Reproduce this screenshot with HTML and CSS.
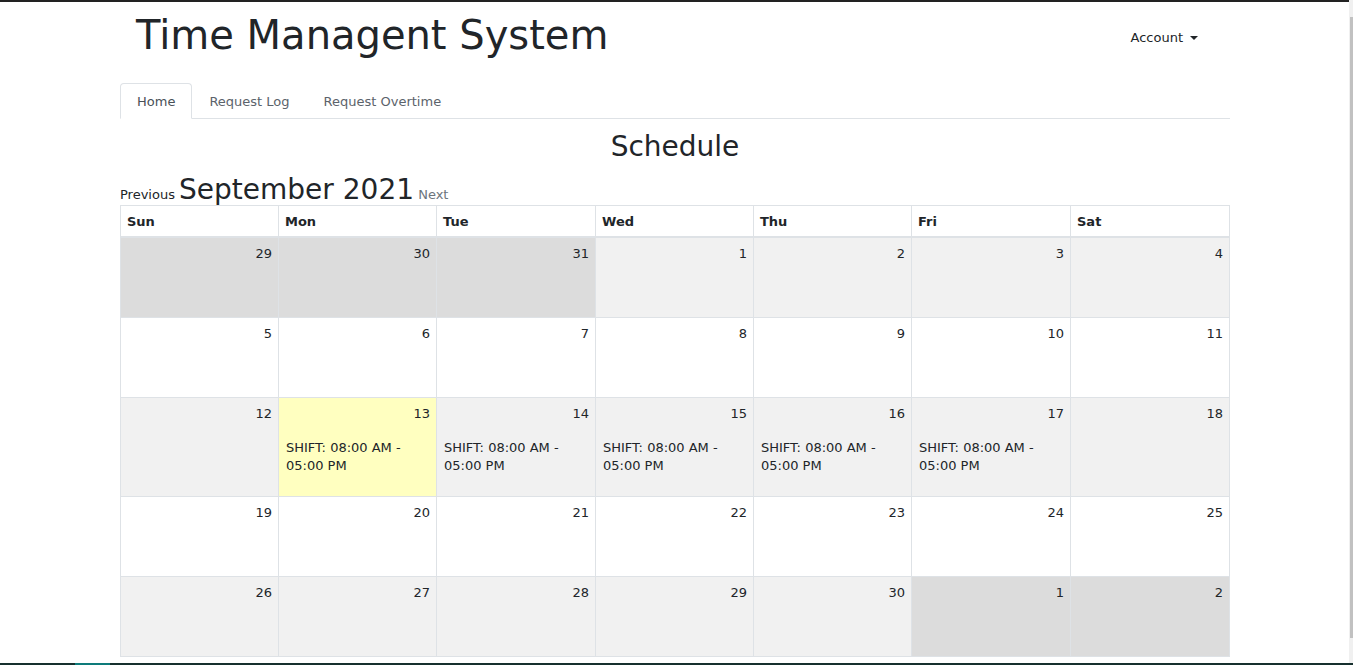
FILE: index.html
```html
<!DOCTYPE html>
<html lang="en">
<head>
<meta charset="utf-8">
<title>Time Managent System</title>
<link rel="stylesheet" href="styles.css">
</head>
<body>
<div class="page">
  <div class="container">
    <header class="header">
      <h1 class="brand">Time Managent System</h1>
      <a class="account" href="#">Account <span class="caret"></span></a>
    </header>
    <ul class="tabs">
      <li><a class="tab active" href="#">Home</a></li>
      <li><a class="tab" href="#">Request Log</a></li>
      <li><a class="tab" href="#">Request Overtime</a></li>
    </ul>
    <h2 class="schedule-title">Schedule</h2>
    <div class="month-nav">
      <a class="prev" href="#">Previous</a>
      <span class="month">September 2021</span>
      <a class="next" href="#">Next</a>
    </div>
    <div class="calendar">
      <div class="head">Sun</div>
      <div class="head">Mon</div>
      <div class="head">Tue</div>
      <div class="head">Wed</div>
      <div class="head">Thu</div>
      <div class="head">Fri</div>
      <div class="head">Sat</div>

      <div class="day other"><div class="num">29</div></div>
      <div class="day other"><div class="num">30</div></div>
      <div class="day other"><div class="num">31</div></div>
      <div class="day grey"><div class="num">1</div></div>
      <div class="day grey"><div class="num">2</div></div>
      <div class="day grey"><div class="num">3</div></div>
      <div class="day grey"><div class="num">4</div></div>

      <div class="day"><div class="num">5</div></div>
      <div class="day"><div class="num">6</div></div>
      <div class="day"><div class="num">7</div></div>
      <div class="day"><div class="num">8</div></div>
      <div class="day"><div class="num">9</div></div>
      <div class="day"><div class="num">10</div></div>
      <div class="day"><div class="num">11</div></div>

      <div class="day grey"><div class="num">12</div></div>
      <div class="day today"><div class="num">13</div><p class="shift">SHIFT: 08:00 AM - 05:00 PM</p></div>
      <div class="day grey"><div class="num">14</div><p class="shift">SHIFT: 08:00 AM - 05:00 PM</p></div>
      <div class="day grey"><div class="num">15</div><p class="shift">SHIFT: 08:00 AM - 05:00 PM</p></div>
      <div class="day grey"><div class="num">16</div><p class="shift">SHIFT: 08:00 AM - 05:00 PM</p></div>
      <div class="day grey"><div class="num">17</div><p class="shift">SHIFT: 08:00 AM - 05:00 PM</p></div>
      <div class="day grey"><div class="num">18</div></div>

      <div class="day"><div class="num">19</div></div>
      <div class="day"><div class="num">20</div></div>
      <div class="day"><div class="num">21</div></div>
      <div class="day"><div class="num">22</div></div>
      <div class="day"><div class="num">23</div></div>
      <div class="day"><div class="num">24</div></div>
      <div class="day"><div class="num">25</div></div>

      <div class="day grey"><div class="num">26</div></div>
      <div class="day grey"><div class="num">27</div></div>
      <div class="day grey"><div class="num">28</div></div>
      <div class="day grey"><div class="num">29</div></div>
      <div class="day grey"><div class="num">30</div></div>
      <div class="day other"><div class="num">1</div></div>
      <div class="day other"><div class="num">2</div></div>
    </div>
  </div>
</div>
<div class="topline"></div>
<div class="scrollbar"><div class="thumb"></div></div>
<div class="taskbar"><div class="task-active"></div></div>
</body>
</html>
```
FILE: styles.css
```css
html, body {
  margin: 0;
  padding: 0;
  height: 100%;
  overflow: hidden;
  background: #fff;
}
body {
  font-family: "DejaVu Sans", Verdana, sans-serif;
  font-size: 13px;
  color: #212529;
}
a { text-decoration: none; }
.page {
  width: 1350px;
}
.container {
  width: 1110px;
  margin: 0 auto;
}
.header {
  display: flex;
  justify-content: space-between;
  align-items: flex-start;
  padding: 11px 32px 0 16px;
}
.brand {
  margin: 0;
  font-size: 40px;
  line-height: 48px;
  font-weight: normal;
  color: #212529;
}
.account {
  margin-top: 18px;
  line-height: 18px;
  color: #212529;
  display: flex;
  align-items: center;
  gap: 7px;
}
.caret {
  width: 0;
  height: 0;
  border-top: 4px solid #212529;
  border-left: 4px solid transparent;
  border-right: 4px solid transparent;
}
.tabs {
  list-style: none;
  margin: 24px 0 0;
  padding: 0;
  display: flex;
  border-bottom: 1px solid #dee2e6;
}
.tab {
  display: block;
  padding: 9px 16px 7px;
  line-height: 18px;
  border: 1px solid transparent;
  border-top-left-radius: 4px;
  border-top-right-radius: 4px;
  margin-bottom: -1px;
  color: #5b636b;
}
.tab.active {
  color: #495057;
  background: #fff;
  border-color: #dee2e6 #dee2e6 #fff;
}
.schedule-title {
  margin: 11px 0 0;
  text-align: center;
  font-size: 28px;
  line-height: 34px;
  font-weight: normal;
}
.month-nav {
  margin-top: 9px;
  padding-top: 1px;
  line-height: 32px;
  height: 31px;
}
.prev { color: #212529; }
.month { font-size: 28px; }
.next { color: #6c757d; }
.calendar {
  display: grid;
  grid-template-columns: 157px 157px 158px 157px 157px 158px 158px;
  grid-template-rows: 31px 79px 79px 98px 79px 79px;
  gap: 1px;
  padding: 1px;
  background: #dee2e6;
}
.head {
  background: #fff;
  font-weight: bold;
  padding: 1px 6px 0;
  line-height: 29px;
  border-bottom: 1px solid #dee2e6;
}
.day {
  background: #fff;
  padding: 6px 6px 0 7px;
}
.day.grey { background: #f1f1f1; }
.day.other { background: #dcdcdc; }
.day.today { background: #ffffc0; }
.num {
  text-align: right;
  line-height: 20px;
}
.shift {
  margin: 15px 0 0;
  line-height: 18px;
}
.topline {
  position: fixed;
  top: 0;
  left: 0;
  width: 1349px;
  height: 2px;
  background: #222;
}
.scrollbar {
  position: fixed;
  top: 0;
  right: 0;
  width: 4px;
  height: 663px;
  background: #f0f0f0;
}
.thumb {
  position: absolute;
  top: 17px;
  left: 1px;
  width: 3px;
  height: 621px;
  background: #c1c1c1;
}
.taskbar {
  position: fixed;
  left: 0;
  bottom: 0;
  width: 100%;
  height: 2px;
  background: #16302e;
}
.task-active {
  position: absolute;
  left: 75px;
  top: 0;
  width: 35px;
  height: 2px;
  background: #0e7b7a;
}
```
